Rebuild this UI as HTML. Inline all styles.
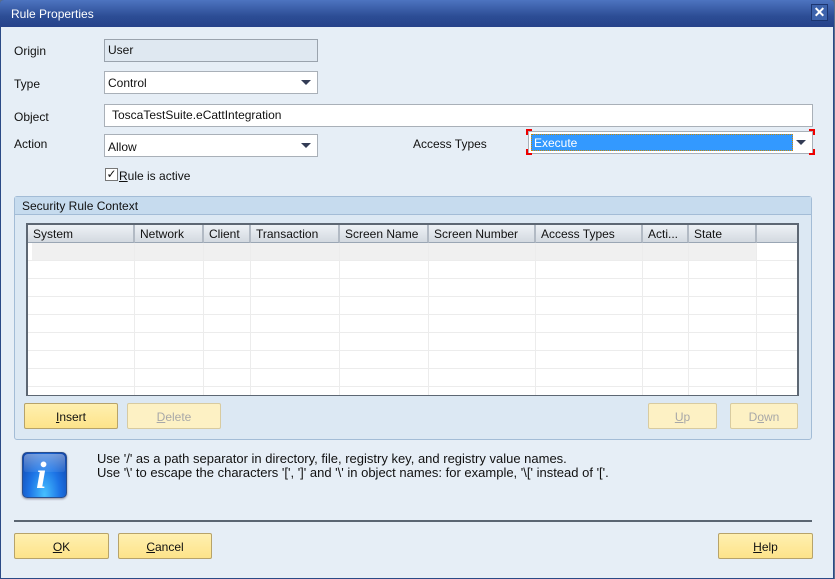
<!DOCTYPE html><html><head><style>
*{box-sizing:border-box}body{margin:0;width:835px;height:579px;overflow:hidden;background:#5a6e8c;font-family:"Liberation Sans",Tahoma,sans-serif;font-size:12px;color:#111;position:relative}
.a{position:absolute}
.win{left:0;top:0;width:834px;height:579px;background:#e6eef6;border:1px solid #2b4a86;border-radius:4px 4px 0 0}
.title{left:0;top:0;width:834px;height:27px;background:linear-gradient(#4d74c0,#2c4d95 60%,#26428a);border-radius:4px 4px 0 0;color:#fff;font-size:12px;padding:7px 11px}
.f{background:#fff;border:1px solid #a9b0b8;height:23px;padding:4px 3px}
.arr{position:absolute;right:6px;top:8px;width:0;height:0;border-left:5px solid transparent;border-right:5px solid transparent;border-top:5px solid #333c55}
.btn{background:linear-gradient(#fff0b0,#fde38a);border:1px solid #b7a36a;border-radius:2px;text-align:center;height:26px;padding-top:6px}
.dis{background:#fdf1c4;border-color:#d8cba0;color:#a8a8a8}
.g{left:14px;top:196px;width:798px;height:244px;background:#dce8f3;border:1px solid #a3bcd6;border-radius:3px}
.gh{left:0;top:0;width:796px;height:18px;background:#c6dbee;border-bottom:1px solid #a3bcd6;padding:2px 7px}
.tbl{left:11px;top:26px;width:773px;height:173px;background:#fff;border:2px solid #5d6773;border-bottom-width:1px;overflow:hidden}
.hd{top:0;height:18px;background:linear-gradient(#eef2f6,#d3d9e0);border-right:2px solid #b2bac4;border-bottom:1px solid #9aa6b4;padding:2px 5px;white-space:nowrap}
.vl{top:18px;width:1px;height:160px;background:#ececec}
.hl{left:0;width:773px;height:1px;background:#ececec}
u{text-decoration:underline}
</style></head><body>
<div class="a win"></div>
<div class="a title">Rule Properties</div>
<div class="a" style="left:811px;top:4px;width:17px;height:17px;border:1px solid #1c3570;background:#3d63ac;color:#fff;font-size:14px;line-height:14px;text-align:center;font-weight:bold">✕</div>
<div class="a" style="left:14px;top:44px">Origin</div>
<div class="a" style="left:14px;top:77px">Type</div>
<div class="a" style="left:14px;top:110px">Object</div>
<div class="a" style="left:14px;top:137px">Action</div>
<div class="a" style="left:413px;top:137px">Access Types</div>
<div class="a f" style="left:104px;top:39px;width:214px;background:#dfe8f1;border-color:#9aa3ad;padding-top:3px">User</div>
<div class="a f" style="left:104px;top:71px;width:214px">Control<span class="arr"></span></div>
<div class="a f" style="left:104px;top:104px;width:709px;padding-left:7px;padding-top:3px">ToscaTestSuite.eCattIntegration</div>
<div class="a f" style="left:104px;top:134px;width:214px;padding-top:5px">Allow<span class="arr"></span></div>
<div class="a f" style="left:528px;top:131px;width:285px;padding:2px"><div style="width:262px;height:17px;background:#3399ff;border:1px dotted #c80;color:#fff;padding:1px 2px">Execute</div><span class="arr" style="top:8px"></span></div>
<div class="a" style="left:526px;top:129px;width:289px;height:26px;border:2px solid #e00;clip-path:polygon(0 0,6px 0,6px 2px,2px 2px,2px 6px,0 6px,0 100%,6px 100%,6px calc(100% - 2px),2px calc(100% - 2px),2px calc(100% - 6px),0 calc(100% - 6px))"></div>
<div class="a" style="left:526px;top:129px;width:289px;height:26px;border:2px solid #e00;clip-path:polygon(100% 0,calc(100% - 6px) 0,calc(100% - 6px) 2px,calc(100% - 2px) 2px,calc(100% - 2px) 6px,100% 6px,100% 100%,calc(100% - 6px) 100%,calc(100% - 6px) calc(100% - 2px),calc(100% - 2px) calc(100% - 2px),calc(100% - 2px) calc(100% - 6px),100% calc(100% - 6px))"></div>
<div class="a" style="left:105px;top:168px;width:13px;height:13px;border:1px solid #777;background:#fff;font-size:12px;line-height:11px;text-align:center">✓</div>
<div class="a" style="left:119px;top:169px"><u>R</u>ule is active</div>
<div class="a g">
<div class="a gh">Security Rule Context</div>
<div class="a tbl">
<div class="a hd" style="left:0;width:107px">System</div>
<div class="a hd" style="left:107px;width:69px">Network</div>
<div class="a hd" style="left:176px;width:47px">Client</div>
<div class="a hd" style="left:223px;width:89px">Transaction</div>
<div class="a hd" style="left:312px;width:89px">Screen Name</div>
<div class="a hd" style="left:401px;width:107px">Screen Number</div>
<div class="a hd" style="left:508px;width:107px">Access Types</div>
<div class="a hd" style="left:615px;width:46px">Acti...</div>
<div class="a hd" style="left:661px;width:68px">State</div>
<div class="a hd" style="left:729px;width:42px"></div>
<div class="a" style="left:4px;top:18px;width:725px;height:17px;background:#f0f0f0"></div>
<div class="a vl" style="left:106px"></div><div class="a vl" style="left:175px"></div><div class="a vl" style="left:222px"></div><div class="a vl" style="left:311px"></div><div class="a vl" style="left:400px"></div><div class="a vl" style="left:507px"></div><div class="a vl" style="left:614px"></div><div class="a vl" style="left:660px"></div><div class="a vl" style="left:728px"></div>
<div class="a hl" style="top:35px"></div><div class="a hl" style="top:53px"></div><div class="a hl" style="top:71px"></div><div class="a hl" style="top:89px"></div><div class="a hl" style="top:107px"></div><div class="a hl" style="top:125px"></div><div class="a hl" style="top:143px"></div><div class="a hl" style="top:161px"></div>
</div>
<div class="a btn" style="left:9px;top:206px;width:94px"><u>I</u>nsert</div>
<div class="a btn dis" style="left:112px;top:206px;width:94px"><u>D</u>elete</div>
<div class="a btn dis" style="left:633px;top:206px;width:69px"><u>U</u>p</div>
<div class="a btn dis" style="left:715px;top:206px;width:68px">D<u>o</u>wn</div>
</div>
<div class="a" style="left:22px;top:452px;width:45px;height:46px;border-radius:5px;background:radial-gradient(ellipse at 50% 95%,#46c0ff,#1d74e6 50%,#1042a8);border:1px solid #2a4f8e;box-shadow:0 1px 2px #889"></div>
<div class="a" style="left:24px;top:454px;width:41px;height:18px;border-radius:4px 4px 2px 2px;background:linear-gradient(rgba(255,255,255,.4),rgba(255,255,255,.08))"></div>
<div class="a" style="left:36px;top:454px;font-family:'Liberation Serif',serif;font-style:italic;font-weight:bold;font-size:38px;color:#fff">i</div>
<div class="a" style="left:97px;top:452px;line-height:14px;font-size:13px">Use '/' as a path separator in directory, file, registry key, and registry value names.<br>Use '\' to escape the characters '[', ']' and '\' in object names: for example, '\[' instead of '['.</div>
<div class="a" style="left:14px;top:520px;width:798px;height:2px;background:#5b6672"></div>
<div class="a btn" style="left:14px;top:533px;width:95px"><u>O</u>K</div>
<div class="a btn" style="left:118px;top:533px;width:94px"><u>C</u>ancel</div>
<div class="a btn" style="left:718px;top:533px;width:95px"><u>H</u>elp</div>
</body></html>
